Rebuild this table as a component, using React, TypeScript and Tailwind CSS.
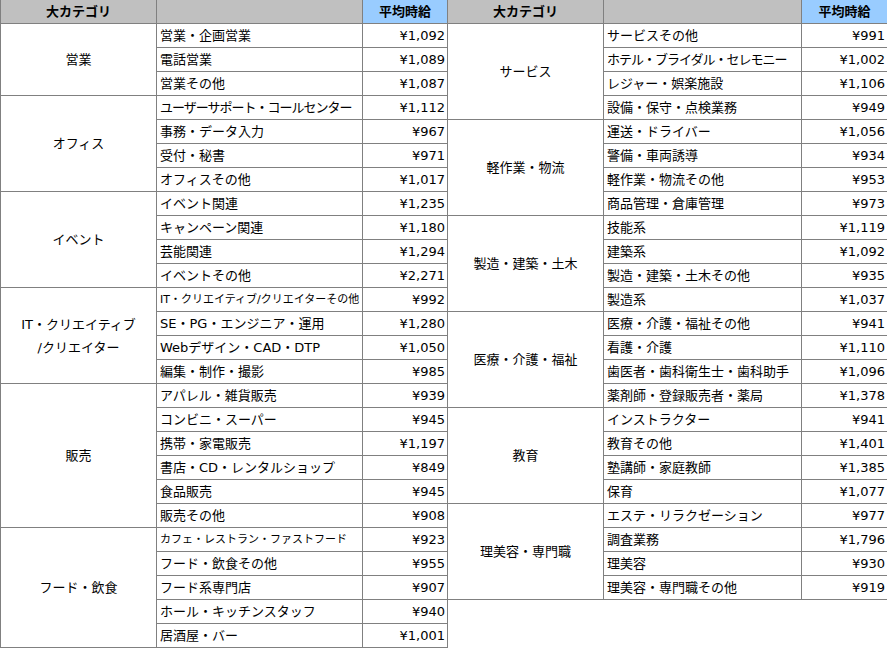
import React from 'react';

// 大カテゴリ → 小カテゴリと平均時給
interface SubItem {
    name: string;
    wage: string;
    small?: boolean;
    tight?: boolean;
}

interface Category {
    name: React.ReactNode;
    items: SubItem[];
}

const leftData: Category[] = [
    {
        name: '営業',
        items: [
            { name: '営業・企画営業', wage: '¥1,092' },
            { name: '電話営業', wage: '¥1,089' },
            { name: '営業その他', wage: '¥1,087' },
        ],
    },
    {
        name: 'オフィス',
        items: [
            { name: 'ユーザーサポート・コールセンター', wage: '¥1,112', tight: true },
            { name: '事務・データ入力', wage: '¥967' },
            { name: '受付・秘書', wage: '¥971' },
            { name: 'オフィスその他', wage: '¥1,017' },
        ],
    },
    {
        name: 'イベント',
        items: [
            { name: 'イベント関連', wage: '¥1,235' },
            { name: 'キャンペーン関連', wage: '¥1,180' },
            { name: '芸能関連', wage: '¥1,294' },
            { name: 'イベントその他', wage: '¥2,271' },
        ],
    },
    {
        name: (
            <>
                IT・クリエイティブ
                <br />
                /クリエイター
            </>
        ),
        items: [
            { name: 'IT・クリエイティブ/クリエイターその他', wage: '¥992', small: true },
            { name: 'SE・PG・エンジニア・運用', wage: '¥1,280' },
            { name: 'Webデザイン・CAD・DTP', wage: '¥1,050' },
            { name: '編集・制作・撮影', wage: '¥985' },
        ],
    },
    {
        name: '販売',
        items: [
            { name: 'アパレル・雑貨販売', wage: '¥939' },
            { name: 'コンビニ・スーパー', wage: '¥945' },
            { name: '携帯・家電販売', wage: '¥1,197' },
            { name: '書店・CD・レンタルショップ', wage: '¥849' },
            { name: '食品販売', wage: '¥945' },
            { name: '販売その他', wage: '¥908' },
        ],
    },
    {
        name: 'フード・飲食',
        items: [
            { name: 'カフェ・レストラン・ファストフード', wage: '¥923', small: true },
            { name: 'フード・飲食その他', wage: '¥955' },
            { name: 'フード系専門店', wage: '¥907' },
            { name: 'ホール・キッチンスタッフ', wage: '¥940' },
            { name: '居酒屋・バー', wage: '¥1,001' },
        ],
    },
];

const rightData: Category[] = [
    {
        name: 'サービス',
        items: [
            { name: 'サービスその他', wage: '¥991' },
            { name: 'ホテル・ブライダル・セレモニー', wage: '¥1,002', tight: true },
            { name: 'レジャー・娯楽施設', wage: '¥1,106' },
            { name: '設備・保守・点検業務', wage: '¥949' },
        ],
    },
    {
        name: '軽作業・物流',
        items: [
            { name: '運送・ドライバー', wage: '¥1,056' },
            { name: '警備・車両誘導', wage: '¥934' },
            { name: '軽作業・物流その他', wage: '¥953' },
            { name: '商品管理・倉庫管理', wage: '¥973' },
        ],
    },
    {
        name: '製造・建築・土木',
        items: [
            { name: '技能系', wage: '¥1,119' },
            { name: '建築系', wage: '¥1,092' },
            { name: '製造・建築・土木その他', wage: '¥935' },
            { name: '製造系', wage: '¥1,037' },
        ],
    },
    {
        name: '医療・介護・福祉',
        items: [
            { name: '医療・介護・福祉その他', wage: '¥941' },
            { name: '看護・介護', wage: '¥1,110' },
            { name: '歯医者・歯科衛生士・歯科助手', wage: '¥1,096' },
            { name: '薬剤師・登録販売者・薬局', wage: '¥1,378' },
        ],
    },
    {
        name: '教育',
        items: [
            { name: 'インストラクター', wage: '¥941' },
            { name: '教育その他', wage: '¥1,401' },
            { name: '塾講師・家庭教師', wage: '¥1,385' },
            { name: '保育', wage: '¥1,077' },
        ],
    },
    {
        name: '理美容・専門職',
        items: [
            { name: 'エステ・リラクゼーション', wage: '¥977' },
            { name: '調査業務', wage: '¥1,796' },
            { name: '理美容', wage: '¥930' },
            { name: '理美容・専門職その他', wage: '¥919' },
        ],
    },
];

function WageTable({
    data,
    tableWidth,
    widths,
}: {
    data: Category[];
    tableWidth: string;
    widths: [string, string, string];
}) {
    return (
        <table className={`table-fixed border-collapse shrink-0 ${tableWidth}`}>
            <colgroup>
                <col className={widths[0]} />
                <col className={widths[1]} />
                <col className={widths[2]} />
            </colgroup>
            <thead>
                <tr className="h-6">
                    <th className="border border-[#808080] bg-[#c0c0c0] p-0 text-center font-bold">大カテゴリ</th>
                    <th className="border border-[#808080] bg-[#c0c0c0] p-0"></th>
                    <th className="border border-[#808080] bg-[#99ccff] p-0 text-center font-bold">平均時給</th>
                </tr>
            </thead>
            <tbody>
                {data.map((cat, ci) =>
                    cat.items.map((item, i) => (
                        <tr key={`${ci}-${i}`} className="h-6">
                            {i === 0 && (
                                <td
                                    rowSpan={cat.items.length}
                                    className="border border-[#808080] p-0 text-center align-middle leading-[23px]"
                                >
                                    {cat.name}
                                </td>
                            )}
                            <td
                                className={`border border-[#808080] py-0 pl-[3px] pr-0 whitespace-nowrap overflow-hidden ${
                                    item.small ? 'text-[11px]' : ''
                                } ${item.tight ? 'tracking-[-1px]' : ''}`}
                            >
                                {item.name}
                            </td>
                            <td className="border border-[#808080] py-0 pl-0 pr-[2px] text-right whitespace-nowrap">
                                {item.wage}
                            </td>
                        </tr>
                    ))
                )}
            </tbody>
        </table>
    );
}

export default function App() {
    return (
        <div className="w-[887px] h-[649px] overflow-hidden bg-white">
            <div className="-mt-px flex items-start text-[13px] leading-[23px] text-black font-['DejaVu_Sans','Noto_Sans_CJK_JP',sans-serif]">
                <WageTable
                    data={leftData}
                    tableWidth="w-[447px]"
                    widths={['w-[156px]', 'w-[206px]', 'w-[85px]']}
                />
                <div className="-ml-px shrink-0">
                    <WageTable
                        data={rightData}
                        tableWidth="w-[440px]"
                        widths={['w-[156px]', 'w-[198px]', 'w-[86px]']}
                    />
                </div>
            </div>
        </div>
    );
}
